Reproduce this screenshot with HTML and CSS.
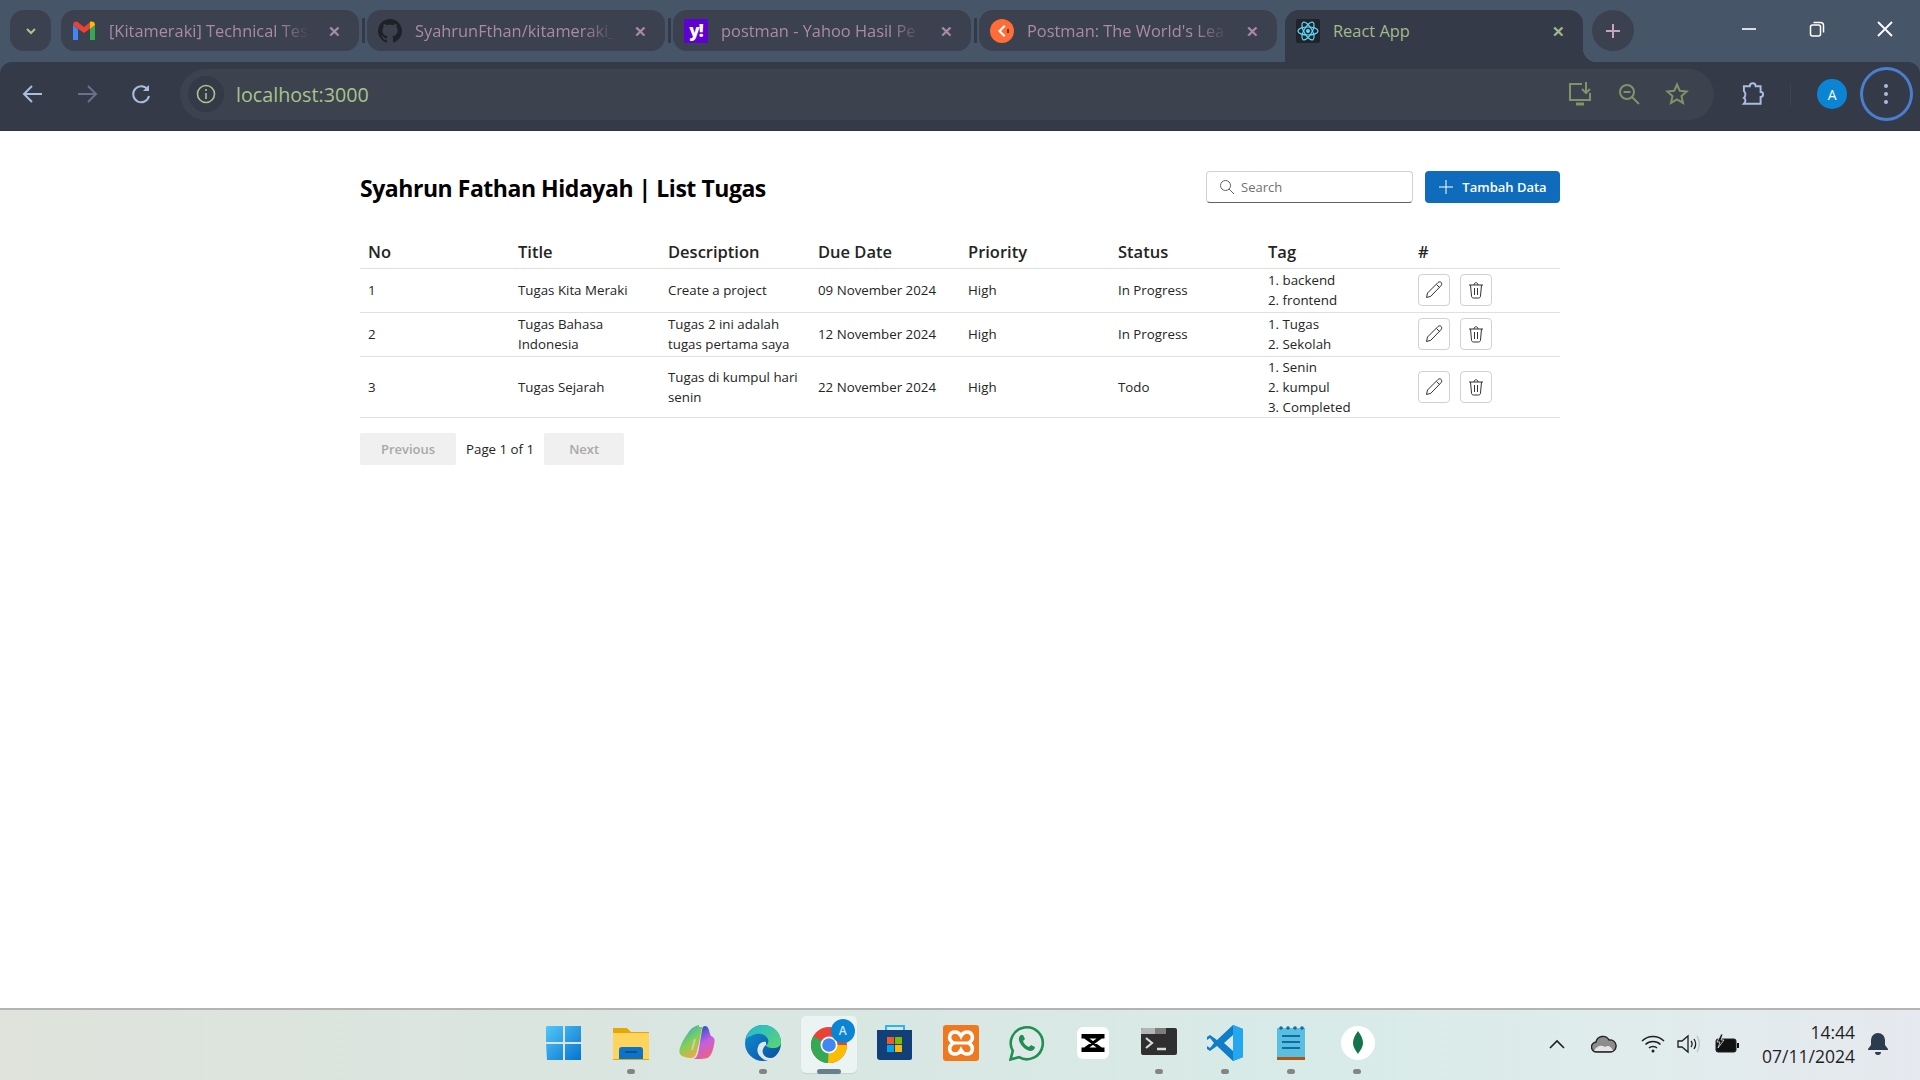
FILE: index.html
```html
<!DOCTYPE html>
<html lang="id">
<head>
  <meta charset="UTF-8">
  <title>React App</title>
  <link rel="stylesheet" href="styles.css">
</head>
<body>
  <div class="chrome">
  <!-- tab strip -->
  <div class="tabstrip">
    <div class="tab-menu"><svg width="14" height="14" viewBox="0 0 14 14"><path d="M3 5l4 4 4-4" fill="none" stroke="#a9c48c" stroke-width="2"/></svg></div>
    <div class="tab">
      <svg class="favicon" viewBox="0 0 24 24"><path d="M1 6v15h5V10z" fill="#4285f4"/><path d="M18 10v11h5V6z" fill="#34a853"/><path d="M1 6l11 8 11-8-1-3-3-.5L12 8 5 2.500 2 3z" fill="#ea4335"/><path d="M18 10l5-4-1-3-4-.5z" fill="#fbbc04"/></svg>
      <span class="tab-title">[Kitameraki] Technical Tes</span>
      <span class="tab-close">✕</span>
    </div>
    <div class="tab-sep"></div>
    <div class="tab">
      <svg class="favicon" viewBox="0 0 16 16"><path fill="#1e2126" d="M8 0C3.58 0 0 3.58 0 8c0 3.54 2.29 6.53 5.47 7.59.4.07.55-.17.55-.38 0-.19-.01-.82-.01-1.49-2.01.37-2.53-.49-2.69-.94-.09-.23-.48-.94-.82-1.13-.28-.15-.68-.52-.01-.53.63-.01 1.08.58 1.23.82.72 1.21 1.87.87 2.33.66.07-.52.28-.87.51-1.07-1.78-.2-3.64-.89-3.64-3.95 0-.87.31-1.59.82-2.15-.08-.2-.36-1.02.08-2.12 0 0 .67-.21 2.2.82.64-.18 1.32-.27 2-.27.68 0 1.36.09 2 .27 1.53-1.04 2.2-.82 2.2-.82.44 1.1.16 1.92.08 2.12.51.56.82 1.27.82 2.15 0 3.07-1.87 3.75-3.65 3.95.29.25.54.73.54 1.48 0 1.07-.01 1.93-.01 2.2 0 .21.15.46.55.38A8.013 8.013 0 0016 8c0-4.42-3.58-8-8-8z"/></svg>
      <span class="tab-title">SyahrunFthan/kitameraki_</span>
      <span class="tab-close">✕</span>
    </div>
    <div class="tab-sep"></div>
    <div class="tab">
      <span class="favicon yahoo">y!</span>
      <span class="tab-title">postman - Yahoo Hasil Pe</span>
      <span class="tab-close">✕</span>
    </div>
    <div class="tab-sep"></div>
    <div class="tab">
      <svg class="favicon" viewBox="0 0 24 24"><circle cx="12" cy="12" r="12" fill="#ff6c37"/><path d="M14 6l-6 6 6 6 1.500-1.500L11 12l4.500-4.500z" fill="#fff"/><path d="M18 10v4" stroke="#3b2a22" stroke-width="1.500"/></svg>
      <span class="tab-title">Postman: The World's Lea</span>
      <span class="tab-close">✕</span>
    </div>
    <div class="tab-gap"></div>
    <div class="tab active">
      <svg class="favicon" viewBox="0 0 24 24"><rect width="24" height="24" rx="2" fill="#20232a"/><g fill="none" stroke="#61dafb" stroke-width="1.200"><ellipse cx="12" cy="12" rx="10" ry="4"/><ellipse cx="12" cy="12" rx="10" ry="4" transform="rotate(60 12 12)"/><ellipse cx="12" cy="12" rx="10" ry="4" transform="rotate(120 12 12)"/></g><circle cx="12" cy="12" r="2" fill="#61dafb"/></svg>
      <span class="tab-title">React App</span>
      <span class="tab-close">✕</span>
    </div>
    <div class="tab-new"><svg width="20" height="20" viewBox="0 0 20 20"><path d="M10 3v14M3 10h14" stroke="#c9a3c4" stroke-width="2"/></svg></div>
    <div class="win-controls">
      <svg width="20" height="20" viewBox="0 0 20 20"><path d="M3 10h14" stroke="#fff" stroke-width="1.600"/></svg>
      <svg width="20" height="20" viewBox="0 0 20 20" fill="none" stroke="#fff" stroke-width="1.500"><rect x="3.500" y="6" width="10" height="11" rx="2"/><path d="M6.500 3.500h7a3 3 0 013 3v7"/></svg>
      <svg width="20" height="20" viewBox="0 0 20 20"><path d="M3 3l14 14M17 3L3 17" stroke="#fff" stroke-width="1.800"/></svg>
    </div>
  </div>

  <!-- toolbar -->
  <div class="toolbar">
    <div class="nav-btns">
      <svg width="24" height="24" viewBox="0 0 24 24" fill="none" stroke="#a9bde0" stroke-width="2"><path d="M21 12H4M11 4l-8 8 8 8"/></svg>
      <svg width="24" height="24" viewBox="0 0 24 24" fill="none" stroke="#67728a" stroke-width="2"><path d="M3 12h17M13 4l8 8-8 8"/></svg>
      <svg width="24" height="24" viewBox="0 0 24 24" fill="none" stroke="#a9bde0" stroke-width="2"><path d="M19 8a8 8 0 10 1 6"/><path d="M20 3v6h-6" fill="#a9bde0" stroke="none"/></svg>
    </div>
    <div class="omnibox">
      <div class="site-info"><svg width="22" height="22" viewBox="0 0 22 22" fill="none" stroke="#a9c48c" stroke-width="1.600"><circle cx="11" cy="11" r="8.500"/><path d="M11 10v6M11 6v2"/></svg></div>
      <span class="url">localhost:3000</span>
      <div class="omni-icons">
        <svg width="26" height="26" viewBox="0 0 26 26" fill="none" stroke="#7f9468" stroke-width="2"><path d="M15 3H3v16h20v-7"/><path d="M19 1v11M15 8l4 4 4-4"/><path d="M9 23h8" stroke-width="3"/></svg>
        <svg width="24" height="24" viewBox="0 0 24 24" fill="none" stroke="#7f9468" stroke-width="2"><circle cx="10" cy="10" r="7"/><path d="M6.500 10h7M15 15l7 7"/></svg>
        <svg width="24" height="24" viewBox="0 0 24 24" fill="none" stroke="#7f9468" stroke-width="2"><path d="M12 2.500l2.800 6.300 6.900.7-5.200 4.600 1.500 6.800L12 17.400l-6 3.500 1.500-6.800L2.300 9.500l6.900-.7z"/></svg>
      </div>
    </div>
    <div class="tool-right">
      <svg class="ext-icon" width="26" height="26" viewBox="0 0 26 26" fill="none" stroke="#a9bde0" stroke-width="2"><path d="M4 5h6a3 3 0 016 0h5v6a2.500 2.500 0 010 5v7H4c2-2 2-5 0-6 2-2 2-5 0-7z"/></svg>
      <div class="tool-sep"></div>
      <div class="avatar">A</div>
      <div class="kebab"><span></span><span></span><span></span></div>
    </div>
  </div>
  </div>

  <!-- page -->
  <main class="page">
    <div class="page-head">
      <h1>Syahrun Fathan Hidayah | List Tugas</h1>
      <div class="head-actions">
        <label class="search">
          <svg width="16" height="16" viewBox="0 0 16 16" fill="none" stroke="#616161" stroke-width="1"><circle cx="6.500" cy="6.500" r="5"/><path d="M10 10l5 5"/></svg>
          <span>Search</span>
        </label>
        <button class="btn-primary"><svg width="16" height="16" viewBox="0 0 16 16"><path d="M8 1v14M1 8h14" stroke="#fff"/></svg>Tambah Data</button>
      </div>
    </div>
    <table class="task-table">
      <thead>
        <tr><th>No</th><th>Title</th><th>Description</th><th>Due Date</th><th>Priority</th><th>Status</th><th>Tag</th><th>#</th></tr>
      </thead>
      <tbody>
        <tr>
          <td>1</td><td>Tugas Kita Meraki</td><td>Create a project</td><td>09 November 2024</td><td>High</td><td>In Progress</td>
          <td><div>1. backend</div><div>2. frontend</div></td>
          <td><div class="row-actions">
            <button class="btn-icon"><svg width="20" height="20" viewBox="0 0 20 20" fill="none" stroke="#333"><path d="M2.500 17.500l1-4.500L14 2.500c1-1 2.500-.8 3.200 0s.8 2.200-.2 3.200L6.800 16.300z"/><path d="M12.500 4.500l3 3"/></svg></button>
            <button class="btn-icon"><svg width="20" height="20" viewBox="0 0 20 20" fill="none" stroke="#333"><path d="M3 5h14M8 5c0-3 4-3 4 0M4.500 5l1 11c0 1 .7 2 2 2h5c1.300 0 2-1 2-2l1-11M8.500 8v7M11.500 8v7"/></svg></button>
          </div></td>
        </tr>
        <tr>
          <td>2</td><td>Tugas Bahasa Indonesia</td><td>Tugas 2 ini adalah tugas pertama saya</td><td>12 November 2024</td><td>High</td><td>In Progress</td>
          <td><div>1. Tugas</div><div>2. Sekolah</div></td>
          <td><div class="row-actions">
            <button class="btn-icon"><svg width="20" height="20" viewBox="0 0 20 20" fill="none" stroke="#333"><path d="M2.500 17.500l1-4.500L14 2.500c1-1 2.500-.8 3.200 0s.8 2.200-.2 3.200L6.800 16.300z"/><path d="M12.500 4.500l3 3"/></svg></button>
            <button class="btn-icon"><svg width="20" height="20" viewBox="0 0 20 20" fill="none" stroke="#333"><path d="M3 5h14M8 5c0-3 4-3 4 0M4.500 5l1 11c0 1 .7 2 2 2h5c1.300 0 2-1 2-2l1-11M8.500 8v7M11.500 8v7"/></svg></button>
          </div></td>
        </tr>
        <tr>
          <td>3</td><td>Tugas Sejarah</td><td>Tugas di kumpul hari senin</td><td>22 November 2024</td><td>High</td><td>Todo</td>
          <td><div>1. Senin</div><div>2. kumpul</div><div>3. Completed</div></td>
          <td><div class="row-actions">
            <button class="btn-icon"><svg width="20" height="20" viewBox="0 0 20 20" fill="none" stroke="#333"><path d="M2.500 17.500l1-4.500L14 2.500c1-1 2.500-.8 3.200 0s.8 2.200-.2 3.200L6.800 16.300z"/><path d="M12.500 4.500l3 3"/></svg></button>
            <button class="btn-icon"><svg width="20" height="20" viewBox="0 0 20 20" fill="none" stroke="#333"><path d="M3 5h14M8 5c0-3 4-3 4 0M4.500 5l1 11c0 1 .7 2 2 2h5c1.300 0 2-1 2-2l1-11M8.500 8v7M11.500 8v7"/></svg></button>
          </div></td>
        </tr>
      </tbody>
    </table>
    <div class="pager">
      <button class="btn-off btn-prev">Previous</button>
      <span>Page 1 of 1</span>
      <button class="btn-off btn-next">Next</button>
    </div>
  </main>

  <!-- taskbar -->
  <footer class="taskbar">
    <div class="task-icons">
      <div class="task-item">
        <svg class="t-icon" viewBox="0 0 36 36"><defs><linearGradient id="win" x1="0" y1="0" x2="1" y2="1"><stop offset="0" stop-color="#52c7f7"/><stop offset="1" stop-color="#0673d0"/></linearGradient></defs><path d="M1 1h16v16H0V2zM19 1h16v16H19zM0 19h17v16H1zM19 19h16v16H19z" fill="url(#win)"/></svg>
      </div>
      <div class="task-item running">
        <svg class="t-icon" viewBox="0 0 36 36"><path d="M0 3h14l4 4h18v28H0z" fill="#e3a708"/><path d="M0 8h36v26H0z" fill="#ffd45c"/><path d="M6 25a3 3 0 013-3h18a3 3 0 013 3v9H6z" fill="#0b73c9"/><path d="M12 27h12" stroke="#0a4f8f" stroke-width="2"/></svg>
      </div>
      <div class="task-item">
        <svg class="t-icon" viewBox="0 0 36 36"><defs><linearGradient id="cop1" x1="0" y1="0" x2="0.600" y2="1"><stop offset="0" stop-color="#1f9ff0"/><stop offset=".55" stop-color="#7fd05a"/><stop offset="1" stop-color="#f5a83c"/></linearGradient><linearGradient id="cop2" x1="0.300" y1="0" x2="0.700" y2="1"><stop offset="0" stop-color="#1a50c8"/><stop offset=".5" stop-color="#c45fe0"/><stop offset="1" stop-color="#f0627a"/></linearGradient></defs><path d="M26 1c3 0 4 3 5 8l1 2c3 1 4 3 3.500 6-1 7-3 14-7 16-2 1-10 1-14 1 3-1 4-4 5-8L23 5c.5-2 1-4 3-4z" fill="url(#cop2)"/><path d="M20 2c3 0 5 0 6-1-2 0-3 2-3.500 4L20 18l-2 8c-1 4-2 7-6 7-4 0-6-1-9-2-3-2-3-5-2-8 1-4 4-10 8-15 3-5 7-7 11-8z" fill="url(#cop1)"/><path d="M16 14c-1 4-2 8-3 11" stroke="#e6efe9" stroke-opacity=".5" stroke-width="2" fill="none"/></svg>
      </div>
      <div class="task-item running">
        <svg class="t-icon" viewBox="0 0 36 36"><defs><linearGradient id="edge1" x1="0" y1="0" x2="1" y2="1"><stop offset="0" stop-color="#1fb8d8"/><stop offset="1" stop-color="#5fd66c"/></linearGradient><linearGradient id="edge2" x1="0" y1="0" x2="1" y2="1"><stop offset="0" stop-color="#0f8fd8"/><stop offset="1" stop-color="#0a4f9c"/></linearGradient></defs><circle cx="18" cy="18" r="18" fill="url(#edge2)"/><path d="M1 14C3 5 10 0 18 0c10 0 18 7 18 17 0 4-3 6-8 6-4 0-7-1-7-3 2-1 3-3 2-6-2-4-7-6-12-5-4 1-8 3-10 5z" fill="url(#edge1)"/><path d="M21 20c-4 3-5 9 0 12 4 2 9 1 13-2l-3 4c-4 2-8 2-11 1-6-3-9-8-7-13 1-4 5-6 8-5z" fill="#dfe8e8"/></svg>
      </div>
      <div class="task-item active-app">
        <svg class="t-icon" viewBox="0 0 36 36"><circle cx="18" cy="18" r="18" fill="#ea4335"/><path d="M18 18L2.400 27A18 18 0 0018 36z" fill="#34a853"/><path d="M2.400 9A18 18 0 002.400 27L18 36l0-18z" fill="#34a853"/><path d="M18 18h18a18 18 0 01-18 18l-1 0z" fill="#fbbc04"/><circle cx="18" cy="18" r="8.500" fill="#fff"/><circle cx="18" cy="18" r="6.800" fill="#4285f4"/></svg>
        <span class="chrome-badge">A</span>
      </div>
      <div class="task-item">
        <svg class="t-icon" viewBox="0 0 36 36"><path d="M9 6V1h18v5" fill="none" stroke="#29b6f0" stroke-width="2"/><path d="M0 5h35v28a2 2 0 01-2 2H3a3 3 0 01-3-3z" fill="#123f78"/><path d="M10 12h7v7h-7z" fill="#f05a28"/><path d="M18 12h7v7h-7z" fill="#7fba00"/><path d="M10 20h7v7h-7z" fill="#00a4ef"/><path d="M18 20h7v7h-7z" fill="#ffb900"/></svg>
      </div>
      <div class="task-item">
        <svg class="t-icon" viewBox="0 0 36 36"><rect width="36" height="36" rx="3" fill="#f0781e"/><path d="M12 7c-6 0-7 7-3 10l2 1-2 1c-4 3-3 10 3 10 3 0 5-2 6-4 1 2 3 4 6 4 6 0 7-7 3-10l-2-1 2-1c4-3 3-10-3-10-3 0-5 2-6 4-1-2-3-4-6-4z" fill="none" stroke="#fff" stroke-width="3.500"/><path d="M12 18h12" stroke="#fff" stroke-width="3"/></svg>
      </div>
      <div class="task-item">
        <svg class="t-icon" viewBox="0 0 36 36"><path d="M1.500 34.500l2.300-8.500A16 16 0 1110 32.200z" fill="#dfeae8" stroke="#1f8f52" stroke-width="2.600"/><path d="M12 10c-2 1-3 4-1 8 2 4 6 7 10 8 3 0 5-2 5-4l-4-2-2 2c-3-1-5-3-6-6l2-2-2-4z" fill="#1f8f52"/></svg>
      </div>
      <div class="task-item">
        <svg class="t-icon t-cap" viewBox="0 0 36 36"><rect x="2" y="2" width="32" height="32" rx="6" fill="#fff"/><path d="M8 12h20v-1.500H8zM8 24h20v1.500H8zM9 11.500L27 24.500M27 11.500L9 24.500" fill="none" stroke="#000" stroke-width="3"/></svg>
      </div>
      <div class="task-item running">
        <svg class="t-icon" viewBox="0 0 36 36"><rect y="3" width="36" height="27" rx="2" fill="#2f2f2f"/><path d="M0 5a2 2 0 012-2h12v6H0z" fill="#b5b5b5"/><path d="M14 3h11v6H14z" fill="#7d7d7d"/><path d="M5 13l6 5-6 5" fill="none" stroke="#d9d9d9" stroke-width="2.200"/><path d="M16 24h9" stroke="#d9d9d9" stroke-width="2.500"/></svg>
      </div>
      <div class="task-item running">
        <svg class="t-icon" viewBox="0 0 36 36"><path d="M26 0l10 4v28l-10 4-16-15-7 5-3-2v-12l3-2 7 5z" fill="#0f7dc8"/><path d="M26 0l10 4v28l-10 4z" fill="#25a7f0"/><path d="M26 10l-9 8 9 8z" fill="#dde8e8"/><path d="M3 13l4 5-4 5 -3-2v-6z" fill="#dde8e8"/></svg>
      </div>
      <div class="task-item running">
        <svg class="t-icon t-note" viewBox="0 0 28 36"><path d="M0 3h28v29H0z" fill="#5bbde0"/><path d="M0 32h28v3H0z" fill="#b25510"/><g fill="#0d6fa0"><circle cx="4" cy="3" r="1.800"/><circle cx="11" cy="3" r="1.800"/><circle cx="18" cy="3" r="1.800"/><circle cx="25" cy="3" r="1.800"/></g><path d="M5 11h18M5 17h18M5 23h18" stroke="#0d6fa0" stroke-width="1.800"/></svg>
      </div>
      <div class="task-item running">
        <svg class="t-icon t-mongo" viewBox="0 0 34 34"><circle cx="17" cy="17" r="17" fill="#fff"/><path d="M17 5c3 4 5 8 5 12 0 4-3 8-5 11-2-3-5-7-5-11 0-4 2-8 5-12z" fill="#13744c"/></svg>
      </div>
    </div>
    <div class="tray">
      <svg width="20" height="20" viewBox="0 0 20 20" fill="none" stroke="#1f1f1f" stroke-width="1.600"><path d="M3 14l7-7 7 7"/></svg>
      <svg class="tray-cloud" width="26" height="20" viewBox="0 0 26 20"><path d="M6 18a5 5 0 01-1-10 7 7 0 0113-2 5.500 5.500 0 012 12z" fill="#8d8d8d" stroke="#222" stroke-width="1.400"/><path d="M3 17c3-6 8-6 11-4 3-2 6-1 8 4z" fill="#e4e4e4"/></svg>
      <svg class="tray-wifi" width="24" height="20" viewBox="0 0 24 20" fill="none" stroke="#1f1f1f" stroke-width="1.500"><path d="M1 7c6-6 16-6 22 0M4.500 10.500c4-4 11-4 15 0M8 14c2-2 6-2 8 0"/><circle cx="12" cy="17" r="1.500" fill="#1f1f1f" stroke="none"/></svg>
      <svg class="tray-vol" width="24" height="22" viewBox="0 0 24 22" fill="none" stroke="#1f1f1f" stroke-width="1.300"><path d="M1 8h4l6-5v16l-6-5H1z"/><path d="M14 8c1.500 2 1.500 4 0 6M17 6c2 3 2 7 0 10"/><path d="M20 3c3 5 3 11 0 16" stroke="#b9c4c2"/></svg>
      <svg class="tray-bat" width="26" height="22" viewBox="0 0 26 22"><rect x="2" y="6" width="20" height="13" rx="2" fill="#111" stroke="#222"/><path d="M23 10h2v5h-2z" fill="#111"/><path d="M7 1L3 9h3l-2 6 6-8H7l2-6z" fill="#111" stroke="#dfeae8" stroke-width=".8"/></svg>
      <div class="clock"><div>14:44</div><div>07/11/2024</div></div>
      <svg width="22" height="24" viewBox="0 0 22 24" fill="#2d3b4e"><path d="M11 1a7 7 0 00-7 7v5l-3 4v1h20v-1l-3-4V8a7 7 0 00-7-7zM8 20a3 3 0 006 0z"/></svg>
    </div>
  </footer>
</body>
</html>
```

FILE: styles.css
```css
* {
  box-sizing: border-box;
}
html, body {
  margin: 0;
  height: 100%;
}
body {
  display: flex;
  flex-direction: column;
  height: 1080px;
  overflow: hidden;
  background: #fff;
  font-family: "Open Sans", "Noto Sans", sans-serif;
  color: #242424;
}
.chrome {
  background: #475569;
}

/* tab strip */
.tabstrip {
  display: flex;
  align-items: flex-start;
  height: 62px;
  padding: 10px 0 0 10px;
}
.tab-menu {
  display: flex;
  align-items: center;
  justify-content: center;
  width: 41px;
  height: 41px;
  margin-right: 10px;
  border-radius: 14px;
  background: #3b414e;
}
.tab {
  display: flex;
  align-items: center;
  width: 298px;
  height: 41px;
  padding: 0 13px 0 11px;
  border-radius: 14px;
  background: #3b414e;
  color: #ab8aa8;
  font-size: 16.4px;
}
.tab.active {
  position: relative;
  height: 52px;
  padding-bottom: 11px;
  border-radius: 14px 14px 0 0;
  background: #343a47;
  color: #a3bb8a;
}
/* flared corner into the frame */
.tab.active::after {
  content: "";
  position: absolute;
  right: -14px;
  bottom: 0;
  width: 14px;
  height: 14px;
  background: radial-gradient(circle at 100% 0, transparent 14px, #343a47 14.5px);
}
.favicon {
  flex: none;
  width: 24px;
  height: 24px;
  margin-right: 13px;
}
.yahoo {
  background: #5f01d1;
  color: #fff;
  font-weight: 800;
  font-size: 17px;
  line-height: 24px;
  text-align: center;
  letter-spacing: -1px;
}
.tab-title {
  flex: 1;
  margin-right: 12px;
  overflow: hidden;
  white-space: nowrap;
  -webkit-mask-image: linear-gradient(to right, #000 84%, transparent);
  mask-image: linear-gradient(to right, #000 84%, transparent);
}
.tab.active .tab-title {
  -webkit-mask-image: none;
  mask-image: none;
}
.tab-close {
  flex: none;
  width: 24px;
  text-align: center;
  font-size: 15px;
  font-weight: 700;
}
.tab-sep {
  width: 3px;
  height: 25px;
  margin: 8px 2.5px 0;
  background: #333946;
}
.tab-gap {
  width: 8px;
}
.tab-new {
  display: flex;
  align-items: center;
  justify-content: center;
  width: 42px;
  height: 41px;
  margin-left: 9px;
  border-radius: 50%;
  background: #3b414e;
}
.win-controls {
  display: flex;
  gap: 48px;
  margin-left: auto;
  padding: 9px 25px 0 0;
}

/* toolbar */
.toolbar {
  display: flex;
  align-items: center;
  height: 69px;
  padding: 0 7px 4px 0;
  border-radius: 12px 12px 0 0;
  background: #343a47;
  border-bottom: 1px solid #2f3440;
}
.nav-btns {
  display: flex;
  gap: 30px;
  padding: 0 27px 0 21px;
}
.omnibox {
  display: flex;
  align-items: center;
  flex: 1;
  height: 51px;
  padding: 0 25px 0 8px;
  border-radius: 26px;
  background: #3c424e;
}
.site-info {
  display: flex;
  align-items: center;
  justify-content: center;
  width: 36px;
  height: 36px;
  border-radius: 50%;
  background: #343a47;
}
.url {
  margin-left: 12px;
  color: #a9c48c;
  font-size: 19.7px;
}
.omni-icons {
  display: flex;
  align-items: center;
  gap: 24px;
  margin-left: auto;
}
.tool-right {
  display: flex;
  align-items: center;
  width: 199px;
  padding-left: 26px;
}
.tool-sep {
  width: 2px;
  height: 24px;
  margin: 0 26px 0 24px;
  background: #3c424e;
}
.avatar {
  display: flex;
  align-items: center;
  justify-content: center;
  width: 30px;
  height: 30px;
  border-radius: 50%;
  background: #0b84d4;
  color: #fff;
  font-size: 14px;
}
.kebab {
  display: flex;
  flex-direction: column;
  align-items: center;
  justify-content: center;
  gap: 4px;
  width: 54px;
  height: 54px;
  margin-left: 13px;
  border: 3px solid #4a7fd0;
  border-radius: 50%;
}
.kebab span {
  width: 4px;
  height: 4px;
  border-radius: 50%;
  background: #a9bde0;
}

/* page */
.page {
  flex: 1;
  width: 1200px;
  margin: 0 auto;
  padding-top: 39px;
}
.page-head {
  display: flex;
  align-items: center;
  justify-content: space-between;
}
h1 {
  margin: 0;
  padding-top: 2px;
  color: #000;
  font-size: 23px;
  font-weight: 700;
  letter-spacing: -0.46px;
}
.head-actions {
  display: flex;
  gap: 12px;
}
.search {
  display: flex;
  align-items: center;
  gap: 6px;
  width: 207px;
  height: 32px;
  padding: 0 12px;
  border: 1px solid #d1d1d1;
  border-bottom-color: #616161;
  border-radius: 4px;
  color: #707070;
  font-size: 13px;
}
.btn-primary {
  display: flex;
  align-items: center;
  justify-content: center;
  gap: 8px;
  width: 135px;
  height: 32px;
  border: 0;
  border-radius: 4px;
  background: #0f6cbd;
  color: #fff;
  font: 600 13px "Open Sans", sans-serif;
}
.task-table {
  width: 100%;
  margin-top: 20px;
  border-collapse: collapse;
  table-layout: fixed;
  font-size: 13.3px;
  line-height: 20px;
}
.task-table th {
  height: 44px;
  padding: 0 8px 6px;
  border-bottom: 1px solid #e0e0e0;
  font-size: 16.5px;
  line-height: 20px;
  font-weight: 600;
  text-align: left;
  vertical-align: bottom;
}
.task-table td {
  height: 44px;
  padding: 0 8px;
  border-bottom: 1px solid #e0e0e0;
}
.row-actions {
  display: flex;
  gap: 10px;
}
.btn-icon {
  display: flex;
  align-items: center;
  justify-content: center;
  width: 32px;
  height: 32px;
  padding: 0;
  border: 1px solid #d1d1d1;
  border-radius: 4px;
  background: #fff;
}
.pager {
  display: flex;
  align-items: center;
  gap: 10px;
  margin-top: 15px;
  font-size: 13.3px;
}
.btn-off {
  height: 32px;
  border: 0;
  border-radius: 2px;
  background: #f0f0f0;
  color: #a8a8a8;
  font: 600 13px "Open Sans", sans-serif;
}
.btn-prev {
  width: 96px;
}
.btn-next {
  width: 80px;
}

/* taskbar */
.taskbar {
  display: grid;
  grid-template-columns: 1fr auto 1fr;
  height: 72px;
  border-top: 2px solid #b4b4b4;
  background: linear-gradient(90deg, #dfe3dc 0%, #d9e6e2 40%, #d8ebe8 70%, #e0ecec 85%, #e6e9ef 100%);
}
.task-icons {
  grid-column: 2;
  display: flex;
  padding-left: 2px;
}
.task-item {
  position: relative;
  display: flex;
  align-items: center;
  justify-content: center;
  width: 66.1px;
  height: 70px;
  padding-bottom: 4px;
}
.t-icon {
  width: 36px;
  height: 36px;
}
.t-note {
  width: 28px;
}
.t-mongo {
  width: 34px;
  height: 34px;
}
.task-item.running::after,
.active-app::after {
  content: "";
  position: absolute;
  bottom: 6px;
  left: 29px;
  width: 8px;
  height: 5px;
  border-radius: 3px;
  background: #848484;
}
.active-app {
  width: 56px;
  height: 57px;
  margin: 6px 5px 0;
  padding-bottom: 0;
  border-radius: 5px;
  background: #ebf4f2;
  box-shadow: 0 1px 1px #c6d2d0;
}
.active-app::after {
  bottom: -1px;
  left: 16px;
  width: 24px;
  background: #67808f;
}
.chrome-badge {
  position: absolute;
  top: 3px;
  right: 2px;
  width: 24px;
  height: 24px;
  border-radius: 50%;
  background: #0b84d4;
  color: #cfe6f5;
  font-size: 12px;
  font-weight: 600;
  line-height: 24px;
  text-align: center;
}
.tray {
  grid-column: 3;
  display: flex;
  align-items: center;
  justify-content: flex-end;
  padding-right: 31px;
  padding-bottom: 2px;
  color: #1f1f1f;
}
.tray-cloud {
  margin-left: 24px;
}
.tray-wifi {
  margin-left: 24px;
}
.tray-vol {
  margin-left: 12px;
}
.tray-bat {
  margin-left: 13px;
}
.clock {
  width: 115px;
  margin-right: 12px;
  font-size: 17.5px;
  line-height: 24px;
  text-align: right;
}
```
